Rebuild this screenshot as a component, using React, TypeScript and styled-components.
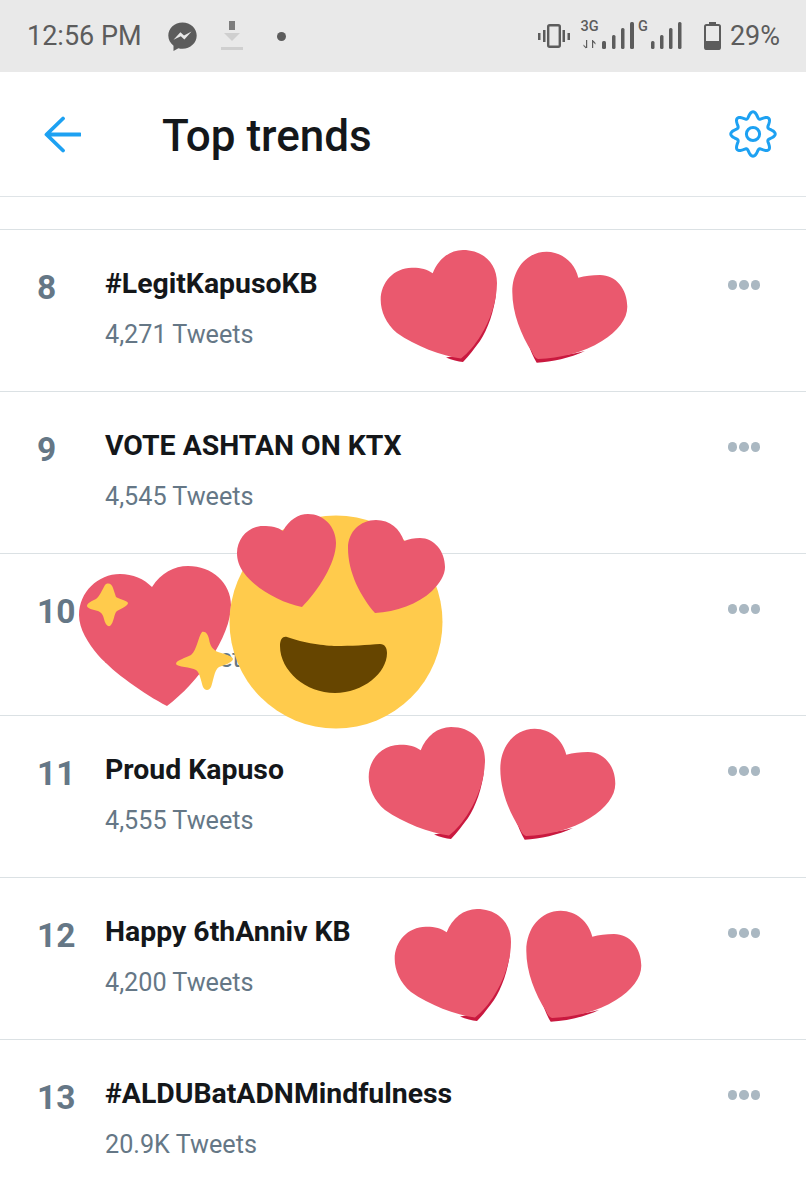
import React from "react";
import styled, { createGlobalStyle } from "styled-components";

const blue = "#1da1f2";
const slate = "#657786";
const heartRed = "#ea596e";
const heartEdge = "#c9193f";
const statusGrey = "#5c5c5c";

// scalloped outline of the settings gear, eight soft lobes
const gearPath = (() => {
  const points: string[] = [];
  for (let i = 0; i < 240; i++) {
    const a = (i / 240) * Math.PI * 2;
    const r = 19.2 + 3 * Math.cos(8 * a);
    const x = 24 + r * Math.sin(a);
    const y = 24 - r * Math.cos(a);
    points.push(`${x.toFixed(2)} ${y.toFixed(2)}`);
  }
  return `M${points.join("L")}Z`;
})();

const GlobalStyle = createGlobalStyle`
  html, body {
    margin: 0;
    padding: 0;
    background: #fff;
  }
  body {
    font-family: Roboto, "Liberation Sans", sans-serif;
    color: #14171a;
    overflow: hidden;
  }
`;

const Page = styled.div`
  width: 806px;
  height: 1200px;
  overflow: hidden;
  display: flex;
  flex-direction: column;
`;

const StatusBar = styled.div`
  height: 72px;
  flex: none;
  background: #e9e9e9;
  display: flex;
  align-items: center;
  justify-content: space-between;
  padding: 0 26px 0 27px;
  color: ${statusGrey};
  font-size: 27px;
`;

const StatusGroup = styled.div`
  display: flex;
  align-items: center;
`;

const Clock = styled.span`
  width: 141px;
`;

const MessengerIcon = styled.svg`
  display: block;
`;

const DownloadIcon = styled.svg`
  display: block;
  margin-left: 23px;
`;

const NotificationDot = styled.span`
  width: 9px;
  height: 9px;
  margin-left: 33px;
  border-radius: 50%;
  background: ${statusGrey};
`;

const VibrateIcon = styled.svg`
  display: block;
`;

const NetworkIcon = styled.svg`
  display: block;
  margin-left: 10px;
  overflow: visible;
`;

const BatteryIcon = styled.svg`
  display: block;
  margin-left: 21px;
`;

const BatteryText = styled.span`
  margin-left: 9px;
`;

const Header = styled.header`
  height: 124px;
  flex: none;
  box-sizing: border-box;
  display: flex;
  align-items: center;
  padding: 0 29px 0 44px;
`;

const BackArrow = styled.svg`
  display: block;
  flex: none;
`;

const Title = styled.h1`
  margin: 3px 0 0 81px;
  flex: 1;
  font-size: 44px;
  font-weight: 500;
  line-height: 50px;
  color: #14171a;
`;

const Gear = styled.svg`
  display: block;
  flex: none;
`;

const Spacer = styled.div`
  height: 33px;
  flex: none;
  box-sizing: border-box;
  border-top: 1px solid #dfe4e7;
`;

const Row = styled.section`
  position: relative;
  height: 162px;
  flex: none;
  box-sizing: border-box;
  border-top: 1px solid #dbe1e4;
  display: flex;
  align-items: flex-start;
  padding-top: 36px;
`;

const Rank = styled.div`
  width: 68px;
  margin-left: 37px;
  flex: none;
  padding-top: 2px;
  font-size: 33.5px;
  line-height: 40px;
  font-weight: 700;
  color: ${slate};
`;

const RowBody = styled.div`
  flex: 1;
  padding-top: 1px;
`;

const Name = styled.div`
  font-size: 28.4px;
  line-height: 34px;
  font-weight: 700;
  color: #14171a;
`;

const Count = styled.div`
  margin-top: 19px;
  font-size: 25.2px;
  line-height: 30px;
  color: ${slate};
`;

const Dots = styled.div`
  display: flex;
  gap: 2px;
  margin: 14px 46px 0 0;
  flex: none;
`;

const Dot = styled.span`
  width: 9.5px;
  height: 9.5px;
  border-radius: 50%;
  background: #aab8c2;
`;

const Sticker = styled.svg<{ $left: number; $top: number }>`
  position: absolute;
  left: ${(p) => p.$left}px;
  top: ${(p) => p.$top}px;
  z-index: 2;
  display: block;
  overflow: visible;
`;

function MoreDots() {
  return (
    <Dots>
      <Dot />
      <Dot />
      <Dot />
    </Dots>
  );
}

function HeartPair(props: { left: number; top: number }) {
  return (
    <Sticker
      $left={props.left}
      $top={props.top}
      width={248}
      height={115}
      viewBox="0 0 248 115"
    >
      <path
        fill={heartEdge}
        d="M116 45C114 62 108 80 100 92C94 100 89 107 83 113C78 112.5 72 111 66 108.5L80 106L101 84Z"
      />
      <path
        fill={heartRed}
        d="M52.7 24.3C58 10 70 1 83 1C103 1 117 14 117 34C117 52 110 72 101 86C95 96 88 104 81 109.5C62 107 35 97 17 84C6 75 0.7 62 0.7 51C0.7 33 14 19 31.7 18.7C40 18.5 47 20 52.7 24.3Z"
      />
      <path
        fill={heartEdge}
        d="M148 95C151 102 153 108 156.7 113.7C172 113 190 109 205 102C190 106 172 108 158 106Z"
      />
      <path
        fill={heartRed}
        d="M198.3 28.7C195 14 182 2.7 166.7 2.7C147 2.7 132.3 20 132.3 42.7C132.3 64 141 86 152 103C153 106 155 109 158 110C180 109 203 104 222 92C238 82 247.3 70 247.3 57.7C247.3 40 236 26 220 26C212 26 205 27 198.3 28.7Z"
      />
    </Sticker>
  );
}

function LoveFace(props: { left: number; top: number }) {
  return (
    <Sticker
      $left={props.left}
      $top={props.top}
      width={368}
      height={218}
      viewBox="0 0 368 218"
    >
      {/* sparkling heart */}
      <path
        fill={heartRed}
        d="M74 74C83 60 96 53 110 53C134 53 153 70 153 92C153 124 120 170 89 193C66 181 36 160 20 142C10 130 1 116 1 102C1 79 20 61 42 61C55 61 66 66 74 74Z"
      />
      <path
        fill="#ffcb4c"
        d="M27 72C30 69 34 71 35 75L38 84C41 86 50 88 50 90C50 93 44 95 39 98C36 100 36 110 32 113C29 114 27 110 26 106C25 102 24 100 20 98C15 97 9 95 9 93C9 90 14 88 18 86C22 83 24 77 27 72Z"
      />
      <path
        fill="#ffcb4c"
        d="M124 119C128 118 130 122 131 126C132 133 135 137 140 139C146 141 155 143 155 146C155 149 147 152 141 154C136 157 135 170 133 174C131 178 127 178 125 174C123 168 122 160 118 157C113 154 99 154 98 151C98 147 108 145 113 142C119 137 120 124 124 119Z"
      />
      {/* face */}
      <circle cx={258} cy={109} r={106.5} fill="#ffcb4c" />
      <path
        fill="#664500"
        d="M209 124C225 130 248 133 258 133C272 133 290 132 302 131C307 131 309 135 309 140C309 160 285 180 257 180C228 180 202 158 202 133C202 126 205 123 209 124Z"
      />
      <path
        fill={heartRed}
        d="M205 18C211 7 220 1 230 1C246 1 258 14 258 30C258 50 240 78 224 94C203 90 178 76 166 60C161 53 159 47 159 40C159 25 171 13 185 13C193 13 200 14 205 18Z"
      />
      <path
        fill={heartRed}
        d="M326 28C331 26 336 25 342 25C356 25 367 38 367 54C367 62 362 70 354 78C340 91 318 99 297 100C283 84 270 60 270 35C270 19 282 7 298 7C312 7 322 16 326 28Z"
      />
    </Sticker>
  );
}

export default function App() {
  return (
    <Page>
      <GlobalStyle />
      <StatusBar>
        <StatusGroup>
          <Clock>12:56 PM</Clock>
          <MessengerIcon width={29} height={29} viewBox="0 0 29 29">
            <path
              fill={statusGrey}
              d="M14.5 0.5C6.6 0.5 0.3 6.4 0.3 13.6C0.3 17.7 2.3 21.3 5.5 23.7V29L10.4 26.2C11.7 26.6 13.1 26.8 14.5 26.8C22.4 26.8 28.7 20.9 28.7 13.6C28.7 6.4 22.4 0.5 14.5 0.5Z"
            />
            <path
              fill="#e9e9e9"
              d="M5.5 17.8L12.4 10.2L16 13.6L23.5 9.5L16.4 17.6L12.8 14.2Z"
            />
          </MessengerIcon>
          <DownloadIcon width={24} height={31} viewBox="0 0 24 31">
            <path fill="#7d7d7d" d="M9 0H15V9H9Z" />
            <path fill="#cfcfcf" d="M4 12H20L12 20Z" />
            <path fill="#cfcfcf" d="M1 26H23V29H1Z" />
          </DownloadIcon>
          <NotificationDot />
        </StatusGroup>
        <StatusGroup>
          <VibrateIcon width={32} height={24} viewBox="0 0 32 24">
            <rect
              x={10.2}
              y={1.2}
              width={11.6}
              height={21.6}
              rx={1.5}
              fill="none"
              stroke={statusGrey}
              strokeWidth={2.4}
            />
            <path
              fill={statusGrey}
              d="M0 9H2.5V16H0ZM5 6H7.5V18H5ZM24.5 6H27V18H24.5ZM29.5 9H32V16H29.5Z"
            />
          </VibrateIcon>
          <NetworkIcon width={103} height={32} viewBox="0 0 103 32">
            <text
              x={0.5}
              y={10.5}
              fill={statusGrey}
              fontFamily="Roboto"
              fontSize={14.5}
              fontWeight={500}
            >
              3G
            </text>
            <path
              fill={statusGrey}
              d="M6 20H7.2V28H6ZM3.5 24.5L6 27V28.5L3.5 26ZM12 20H13.2V28H12ZM13 20L15.5 23V24.5L13 22Z"
            />
            <rect x={22} y={21} width={4} height={8} rx={1.5} fill={statusGrey} />
            <rect x={32} y={15} width={3.5} height={14} rx={1.5} fill={statusGrey} />
            <rect x={41} y={8} width={3.5} height={21} rx={1.5} fill={statusGrey} />
            <rect x={50} y={2} width={4} height={27} rx={1.5} fill={statusGrey} />
            <text
              x={58}
              y={10.5}
              fill={statusGrey}
              fontFamily="Roboto"
              fontSize={14.5}
              fontWeight={500}
            >
              G
            </text>
            <rect x={71} y={21} width={3.5} height={8} rx={1.5} fill={statusGrey} />
            <rect x={80} y={15} width={3.5} height={14} rx={1.5} fill={statusGrey} />
            <rect x={89} y={8} width={3.5} height={21} rx={1.5} fill={statusGrey} />
            <rect x={98} y={2} width={3.5} height={27} rx={1.5} fill={statusGrey} />
          </NetworkIcon>
          <BatteryIcon width={17} height={28} viewBox="0 0 17 28">
            <path fill={statusGrey} d="M5 0H12V3H5Z" />
            <rect
              x={1}
              y={3}
              width={15}
              height={24}
              rx={1.5}
              fill="none"
              stroke={statusGrey}
              strokeWidth={2}
            />
            <path
              fill={statusGrey}
              d="M1 19H16V26.5C16 27.3 15.3 28 14.5 28H2.5C1.7 28 1 27.3 1 26.5Z"
            />
          </BatteryIcon>
          <BatteryText>29%</BatteryText>
        </StatusGroup>
      </StatusBar>

      <Header>
        <BackArrow width={37} height={37} viewBox="0 0 37 37">
          <path
            d="M36 18.5H3M19 2.5L2.5 18.5L19 34.5"
            fill="none"
            stroke={blue}
            strokeWidth={3.8}
            strokeLinecap="round"
            strokeLinejoin="round"
          />
        </BackArrow>
        <Title>Top trends</Title>
        <Gear width={48} height={48} viewBox="0 0 48 48">
          <path d={gearPath} fill="none" stroke={blue} strokeWidth={3} />
          <circle cx={24} cy={24} r={6.6} fill="none" stroke={blue} strokeWidth={3} />
        </Gear>
      </Header>

      <Spacer />

      <Row>
        <Rank>8</Rank>
        <RowBody>
          <Name>#LegitKapusoKB</Name>
          <Count>4,271 Tweets</Count>
        </RowBody>
        <MoreDots />
        <HeartPair left={380} top={19} />
      </Row>
      <Row>
        <Rank>9</Rank>
        <RowBody>
          <Name>VOTE ASHTAN ON KTX</Name>
          <Count>4,545 Tweets</Count>
        </RowBody>
        <MoreDots />
      </Row>
      <Row>
        <Rank>10</Rank>
        <RowBody>
          <Name>&nbsp;</Name>
          <Count>4,548 Tweets</Count>
        </RowBody>
        <MoreDots />
        <LoveFace left={78} top={-41} />
      </Row>
      <Row>
        <Rank>11</Rank>
        <RowBody>
          <Name>Proud Kapuso</Name>
          <Count>4,555 Tweets</Count>
        </RowBody>
        <MoreDots />
        <HeartPair left={368} top={10} />
      </Row>
      <Row>
        <Rank>12</Rank>
        <RowBody>
          <Name>Happy 6thAnniv KB</Name>
          <Count>4,200 Tweets</Count>
        </RowBody>
        <MoreDots />
        <HeartPair left={394} top={30} />
      </Row>
      <Row>
        <Rank>13</Rank>
        <RowBody>
          <Name>#ALDUBatADNMindfulness</Name>
          <Count>20.9K Tweets</Count>
        </RowBody>
        <MoreDots />
      </Row>
    </Page>
  );
}
